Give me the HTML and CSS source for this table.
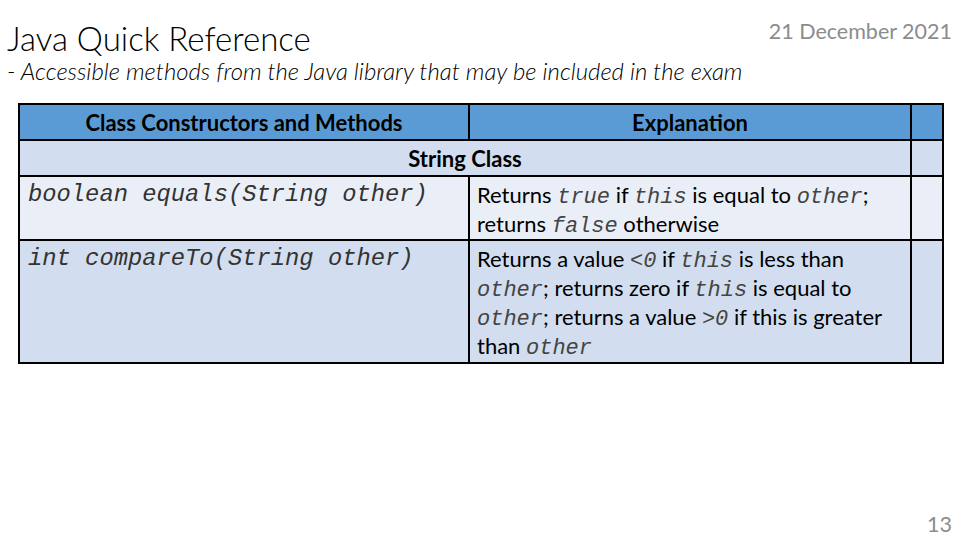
FILE: index.html
```html
<!DOCTYPE html>
<html>
<head>
<meta charset="utf-8">
<link rel="stylesheet" href="styles.css">
</head>
<body>
<div class="slide">
  <header class="top">
    <h1 class="title">Java Quick Reference</h1>
    <span class="date">21 December 2021</span>
  </header>
  <p class="sub">- Accessible methods from the Java library that may be included in the exam</p>
  <table class="ref">
    <colgroup><col class="c1"><col class="c2"><col class="c3"></colgroup>
    <tr class="head">
      <th>Class Constructors and Methods</th>
      <th>Explanation</th>
      <th></th>
    </tr>
    <tr class="group">
      <th colspan="2">String Class</th>
      <td></td>
    </tr>
    <tr class="light r1">
      <td class="sig">boolean equals(String other)</td>
      <td class="exp">Returns <code>true</code> if <code>this</code> is equal to <code>other</code>; returns <code>false</code> otherwise</td>
      <td></td>
    </tr>
    <tr class="dark r2">
      <td class="sig">int compareTo(String other)</td>
      <td class="exp">Returns a value <code>&lt;0</code> if <code>this</code> is less than <code>other</code>; returns zero if <code>this</code> is equal to <code>other</code>; returns a value <code>&gt;0</code> if this is greater than <code>other</code></td>
      <td></td>
    </tr>
  </table>
  <footer class="page">13</footer>
</div>
</body>
</html>
```
FILE: styles.css
```css
html, body { margin: 0; padding: 0; background: #fff; }
.slide {
  width: 960px; height: 540px; box-sizing: border-box;
  display: flex; flex-direction: column;
  font-family: Lato, "Open Sans", sans-serif;
  color: #000;
}
.top {
  display: flex; justify-content: space-between; align-items: flex-start;
  padding: 0 8px 0 7px;
}
.title {
  margin: 19px 0 0 0;
  font-weight: 300; font-size: 33px; line-height: 38px;
}
.date {
  margin-top: 17px;
  font-size: 21.5px; line-height: 28px; color: #8c8c8c;
}
.sub {
  margin: 0; padding-left: 7px;
  font-style: italic; font-weight: 300; font-size: 23.9px; line-height: 28px;
}
.ref {
  margin: 18px 0 0 18px;
  border-collapse: collapse;
  width: 924px; table-layout: fixed;
  font-size: 22px;
}
.c1 { width: 450px; }
.c2 { width: 442px; }
.c3 { width: 32px; }
.ref th, .ref td { border: 2px solid #000; padding: 0; vertical-align: top; }
.head { background: #5b9bd5; height: 36px; }
.head th { font-weight: 700; text-align: center; vertical-align: middle; }
.group { background: #d2deef; height: 36px; }
.group th { font-weight: 700; text-align: center; vertical-align: middle; }
.light { background: #eaeff7; height: 64px; }
.dark { background: #d2deef; height: 123px; }
.sig {
  font-family: "Liberation Mono", monospace; font-style: italic;
  font-size: 23.8px; line-height: 29px; padding: 3px 0 0 8px !important;
  color: #333;
}
.exp { line-height: 29px; padding: 3px 6px 0 7px !important; }
.exp code {
  font-family: "Liberation Mono", monospace; font-style: italic; font-size: 22px;
  line-height: 1; color: #444;
}
.page {
  margin-top: auto; align-self: flex-end;
  padding: 0 8px 2px 0;
  font-size: 21.5px; line-height: 28px; color: #8c8c8c;
}
```
